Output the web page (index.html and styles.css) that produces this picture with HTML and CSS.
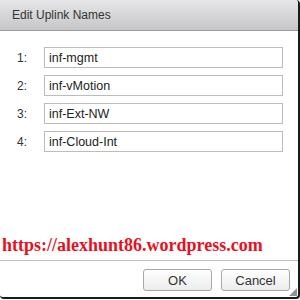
FILE: index.html
```html
<!DOCTYPE html>
<html lang="en">
<head>
  <title>Edit Uplink Names</title>
  <link rel="stylesheet" href="styles.css">
</head>
<body>
  <div class="dialog">
    <div class="dialog-header">Edit Uplink Names</div>
    <div class="dialog-body">
      <div class="uplink-row">
        <label for="up1">1:</label>
        <input type="text" id="up1" value="inf-mgmt" />
      </div>
      <div class="uplink-row">
        <label for="up2">2:</label>
        <input type="text" id="up2" value="inf-vMotion" />
      </div>
      <div class="uplink-row">
        <label for="up3">3:</label>
        <input type="text" id="up3" value="inf-Ext-NW" />
      </div>
      <div class="uplink-row">
        <label for="up4">4:</label>
        <input type="text" id="up4" value="inf-Cloud-Int" />
      </div>
    </div>
    <div class="watermark">https://alexhunt86.wordpress.com</div>
    <div class="dialog-footer">
      <button class="btn">OK</button>
      <button class="btn">Cancel</button>
      <span class="grip"></span>
    </div>
  </div>
</body>
</html>
```

FILE: styles.css
```css
body {
  margin: 0;
  background: #fff;
  font-family: 'Liberation Sans', Arial, sans-serif;
}

.dialog {
  width: 298px;
  height: 297px;
  background: white;
  border-right: 2px solid #1a1a1a;
  border-bottom: 2px solid #1a1a1a;
  border-radius: 0 4px 4px 4px;
  display: flex;
  flex-direction: column;
  overflow: hidden;
  position: relative;
}

.dialog-header {
  height: 30px;
  line-height: 30px;
  padding-left: 12px;
  font-size: 12px;
  color: #333;
  background: linear-gradient(#e6e6e8, #c6c6c8);
  border-bottom: 1px solid #9a9a9a;
}

.dialog-body {
  padding: 16px 15px 0 17px;
  display: flex;
  flex-direction: column;
  gap: 7px;
}

.uplink-row {
  display: flex;
  align-items: center;
}

.uplink-row label {
  width: 27px;
  font-size: 12px;
  color: #333;
}

.uplink-row input {
  flex: 1;
  height: 21px;
  box-sizing: border-box;
  margin: 0;
  padding: 0 4px;
  border: 1px solid #bcbcbc;
  font-family: 'Liberation Sans', Arial, sans-serif;
  font-size: 12.5px;
  color: #222;
  outline: none;
}

.watermark {
  margin-top: auto;
  padding-left: 2px;
  font-family: 'Liberation Serif', 'Times New Roman', serif;
  font-weight: bold;
  font-size: 18px;
  color: #e8101e;
  line-height: 20px;
  margin-bottom: 5px;
}

.dialog-footer {
  height: 37px;
  border-top: 1px solid #bdbdbd;
  display: flex;
  justify-content: flex-end;
  align-items: flex-start;
  gap: 9px;
  padding: 8px 8px 0 0;
  box-sizing: border-box;
}

.btn {
  width: 69px;
  height: 22px;
  margin: 0;
  padding: 0;
  border: 1px solid #a8a8a8;
  border-radius: 3px;
  background: linear-gradient(#ffffff, #ececec);
  font-family: 'Liberation Sans', Arial, sans-serif;
  font-size: 13px;
  color: #333;
}

.grip {
  position: absolute;
  right: 1px;
  bottom: 1px;
  width: 8px;
  height: 8px;
  background: radial-gradient(circle, #888 0.7px, transparent 0.8px) 0 0 / 2px 2px;
  clip-path: polygon(100% 0, 100% 100%, 0 100%);
}
```
